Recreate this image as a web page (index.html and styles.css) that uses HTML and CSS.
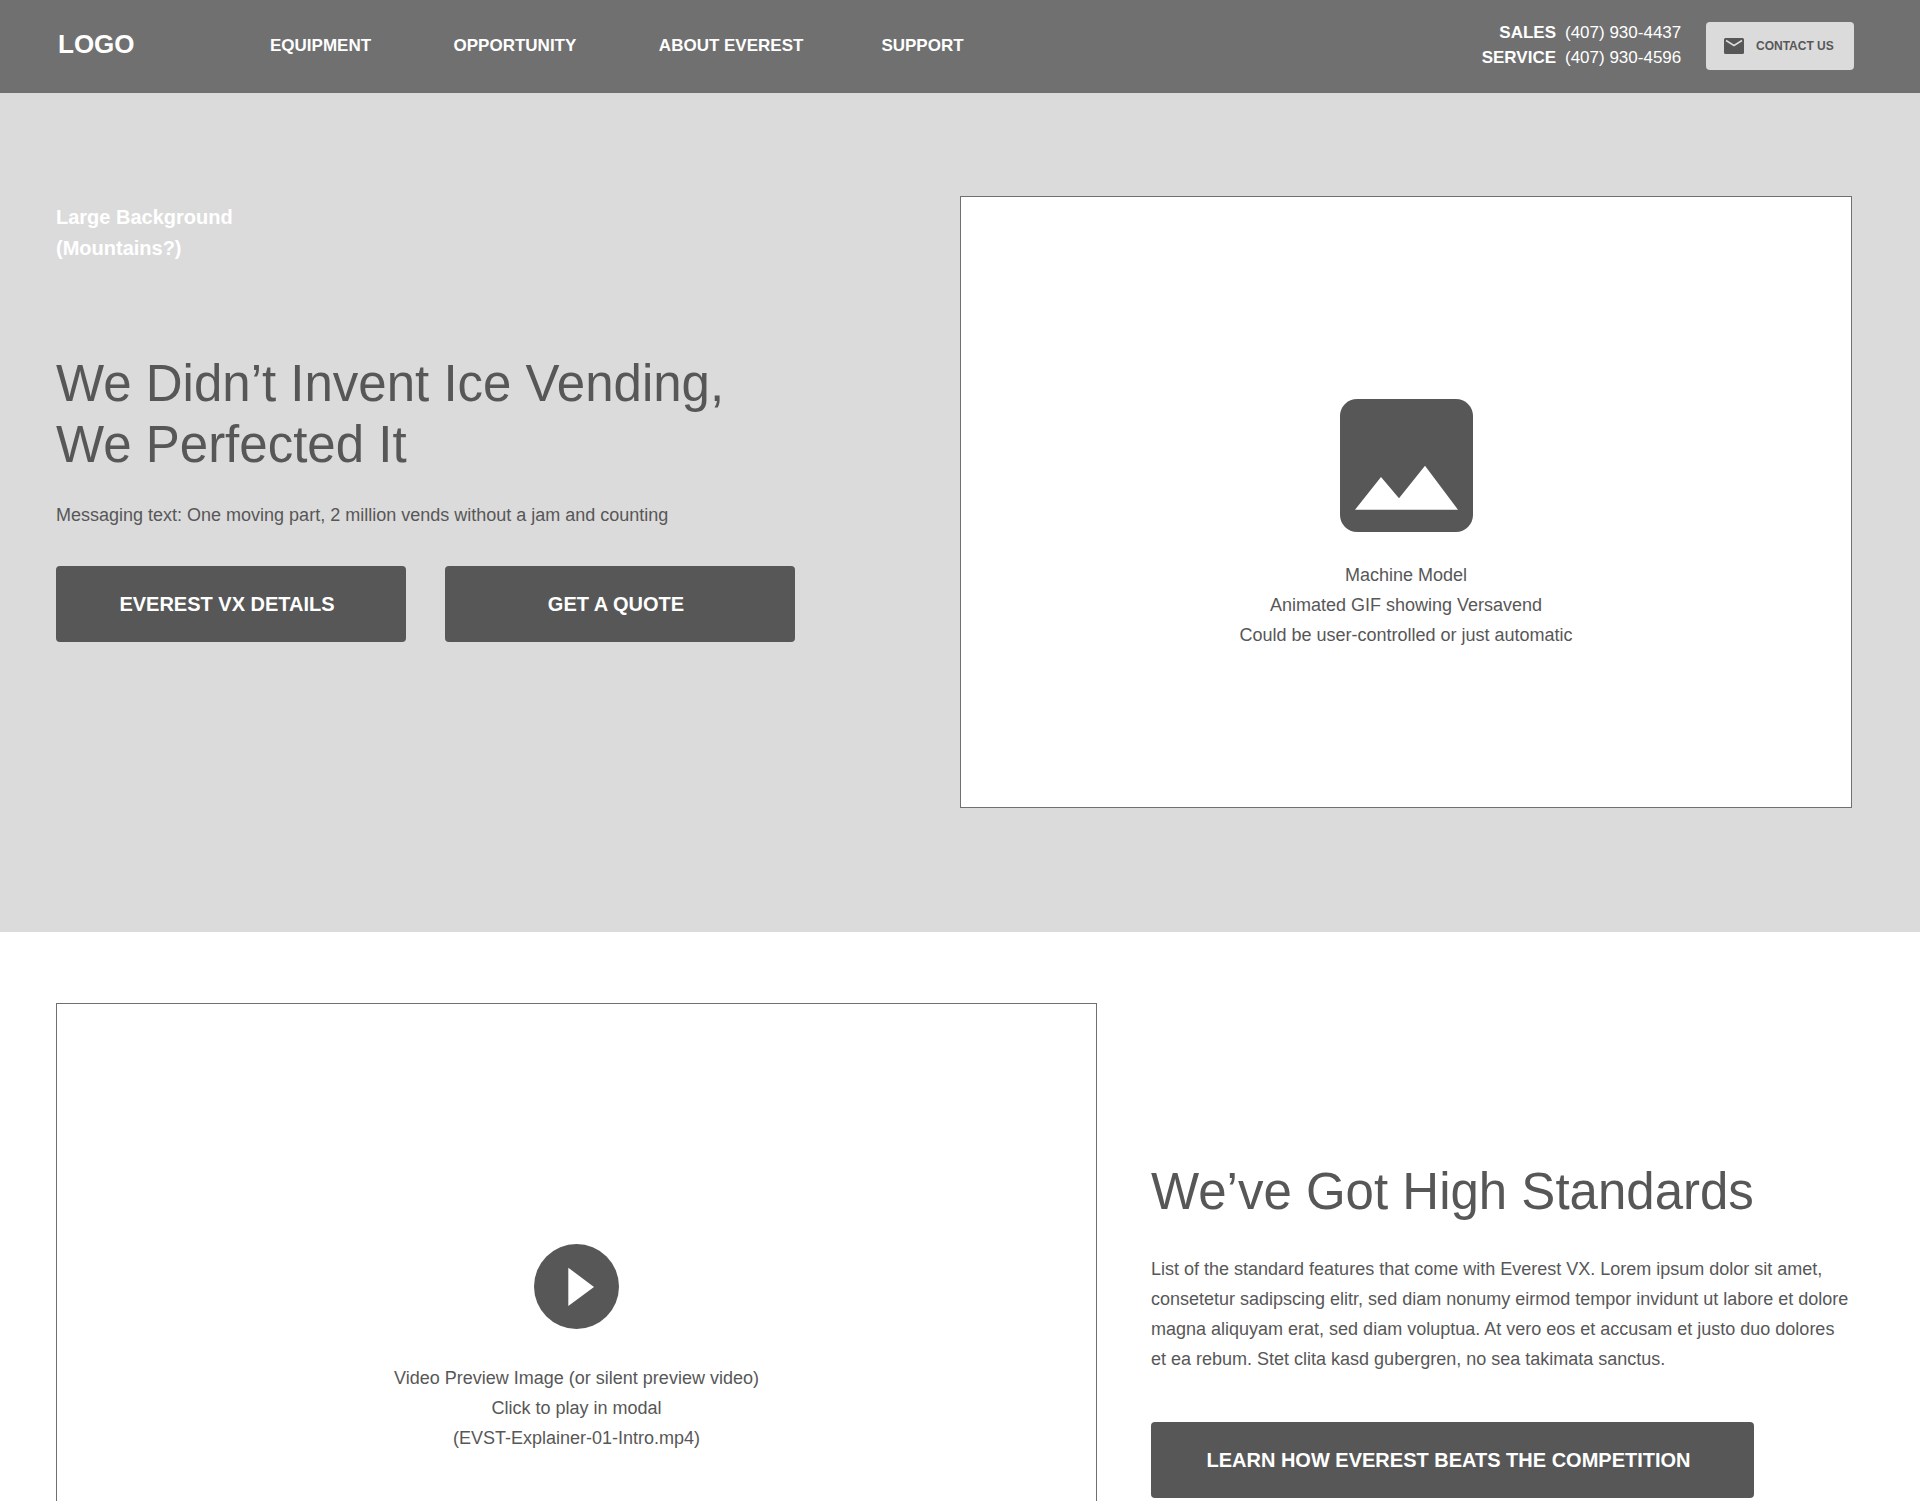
FILE: index.html
```html
<!DOCTYPE html>
<html lang="en">
<head>
<meta charset="utf-8">
<title>Everest</title>
<link rel="stylesheet" href="styles.css">
</head>
<body>
<header class="site-header">
  <a class="logo">LOGO</a>
  <nav class="main-nav">
    <a>EQUIPMENT</a>
    <a>OPPORTUNITY</a>
    <a>ABOUT EVEREST</a>
    <a class="nav-last">SUPPORT</a>
  </nav>
  <div class="phones">
    <div class="phone-row"><strong>SALES</strong><span>(407) 930-4437</span></div>
    <div class="phone-row"><strong>SERVICE</strong><span>(407) 930-4596</span></div>
  </div>
  <a class="contact-btn">
    <svg class="mail-icon" viewBox="0 0 20 16" aria-hidden="true"><path class="icon-fill" d="M1.5 0h17A1.5 1.5 0 0 1 20 1.5v13a1.5 1.5 0 0 1-1.500 1.500h-17A1.500 1.500 0 0 1 0 14.500v-13A1.500 1.500 0 0 1 1.500 0z"/><path class="mail-flap" d="M2 2.500l8 5 8-5"/></svg>
    <span>CONTACT US</span>
  </a>
</header>

<section class="hero">
  <div class="hero-copy">
    <p class="bg-note">Large Background<br>(Mountains?)</p>
    <h1 class="headline">We Didn’t Invent Ice Vending,<br>We Perfected It</h1>
    <p class="message">Messaging text: One moving part, 2 million vends without a jam and counting</p>
    <div class="btn-row">
      <a class="btn btn-half">EVEREST VX DETAILS</a>
      <a class="btn btn-half">GET A QUOTE</a>
    </div>
  </div>
  <div class="placeholder machine">
    <svg class="image-icon" viewBox="0 0 133 133" aria-hidden="true"><rect class="icon-fill" width="133" height="133" rx="17"/><path class="icon-light" d="M15 110.700L41 78l18 21.300L85 66.700l33 44z"/></svg>
    <p class="caption">Machine Model<br>Animated GIF showing Versavend<br>Could be user-controlled or just automatic</p>
  </div>
</section>

<section class="standards">
  <div class="placeholder video">
    <svg class="play-icon" viewBox="0 0 85 85" aria-hidden="true"><circle class="icon-fill" cx="42.500" cy="42.500" r="42.500"/><path class="icon-light" d="M34.300 23.700L60 43 34.300 62z"/></svg>
    <p class="caption">Video Preview Image (or silent preview video)<br>Click to play in modal<br>(EVST-Explainer-01-Intro.mp4)</p>
  </div>
  <div class="standards-copy">
    <h2 class="headline">We’ve Got High Standards</h2>
    <p class="body-text">List of the standard features that come with Everest VX. Lorem ipsum dolor sit amet, consetetur sadipscing elitr, sed diam nonumy eirmod tempor invidunt ut labore et dolore magna aliquyam erat, sed diam voluptua. At vero eos et accusam et justo duo dolores et ea rebum. Stet clita kasd gubergren, no sea takimata sanctus.</p>
    <a class="btn btn-wide">LEARN HOW EVEREST BEATS THE COMPETITION</a>
  </div>
</section>
</body>
</html>
```
FILE: styles.css
```css
* { box-sizing: border-box; }
html, body { height: 1501px; overflow: hidden; }
body {
  margin: 0;
  background: #fff;
  color: #575757;
  font-family: "Liberation Sans", Arial, sans-serif;
  font-size: 18px;
}
p, h1, h2 { margin: 0; font-weight: 400; }

.site-header {
  display: flex;
  align-items: center;
  height: 93px;
  padding: 0 66px 0 58px;
  background: #707070;
  color: #fff;
}
.logo { width: 212px; font-size: 26px; font-weight: 700; margin-top: -4px; }
.main-nav { display: flex; gap: 82.5px; font-size: 17px; font-weight: 700; margin-top: -2px; }
.nav-last { margin-left: -4.5px; }
.phones { margin-left: auto; font-size: 17px; line-height: 25px; margin-top: -3px; }
.phone-row { display: flex; justify-content: flex-end; gap: 9px; white-space: nowrap; }
.phone-row span { width: 115px; }
.contact-btn {
  display: flex;
  align-items: center;
  gap: 12px;
  width: 148px;
  height: 48px;
  margin: -1px 0 0 26px;
  padding-left: 18px;
  border-radius: 4px;
  background: #dbdbdb;
  color: #575757;
  font-size: 12px;
  font-weight: 700;
}
.mail-icon { width: 20px; height: 16px; }
.icon-fill { fill: #575757; }
.icon-light { fill: #fff; }
.mail-flap { fill: none; stroke: #dbdbdb; stroke-width: 1.500; }

.hero {
  display: flex;
  justify-content: space-between;
  height: 839px;
  padding: 103px 68px 0 56px;
  background: #dbdbdb;
}
.bg-note { margin-top: 6px; color: #fff; font-size: 20px; font-weight: 700; line-height: 31px; }
.headline { font-size: 51px; line-height: 61px; }
.hero .headline { margin-top: 89px; }
.message { margin-top: 25px; line-height: 30px; }
.btn-row { display: flex; gap: 39px; margin-top: 36px; }
.btn {
  display: flex;
  align-items: center;
  justify-content: center;
  height: 76px;
  padding-right: 8px;
  border-radius: 4px;
  background: #575757;
  color: #fff;
  font-size: 20px;
  font-weight: 700;
}
.btn-half { width: 350px; }
.btn-wide { width: 603px; margin-top: 48px; }

.placeholder {
  display: flex;
  flex-direction: column;
  align-items: center;
  justify-content: center;
  border: 1px solid #707070;
  background: #fff;
  text-align: center;
}
.machine { width: 892px; height: 612px; padding-top: 44px; }
.image-icon { width: 133px; height: 133px; }
.caption { margin-top: 28px; line-height: 30px; }

.standards { display: flex; padding: 71px 68px 0 56px; }
.video { flex: none; width: 1041px; height: 691px; }
.play-icon { width: 85px; height: 85px; }
.video .caption { margin-top: 34px; }
.standards-copy { margin-left: 54px; padding-top: 158px; }
.body-text { margin-top: 32px; line-height: 30px; }
```
